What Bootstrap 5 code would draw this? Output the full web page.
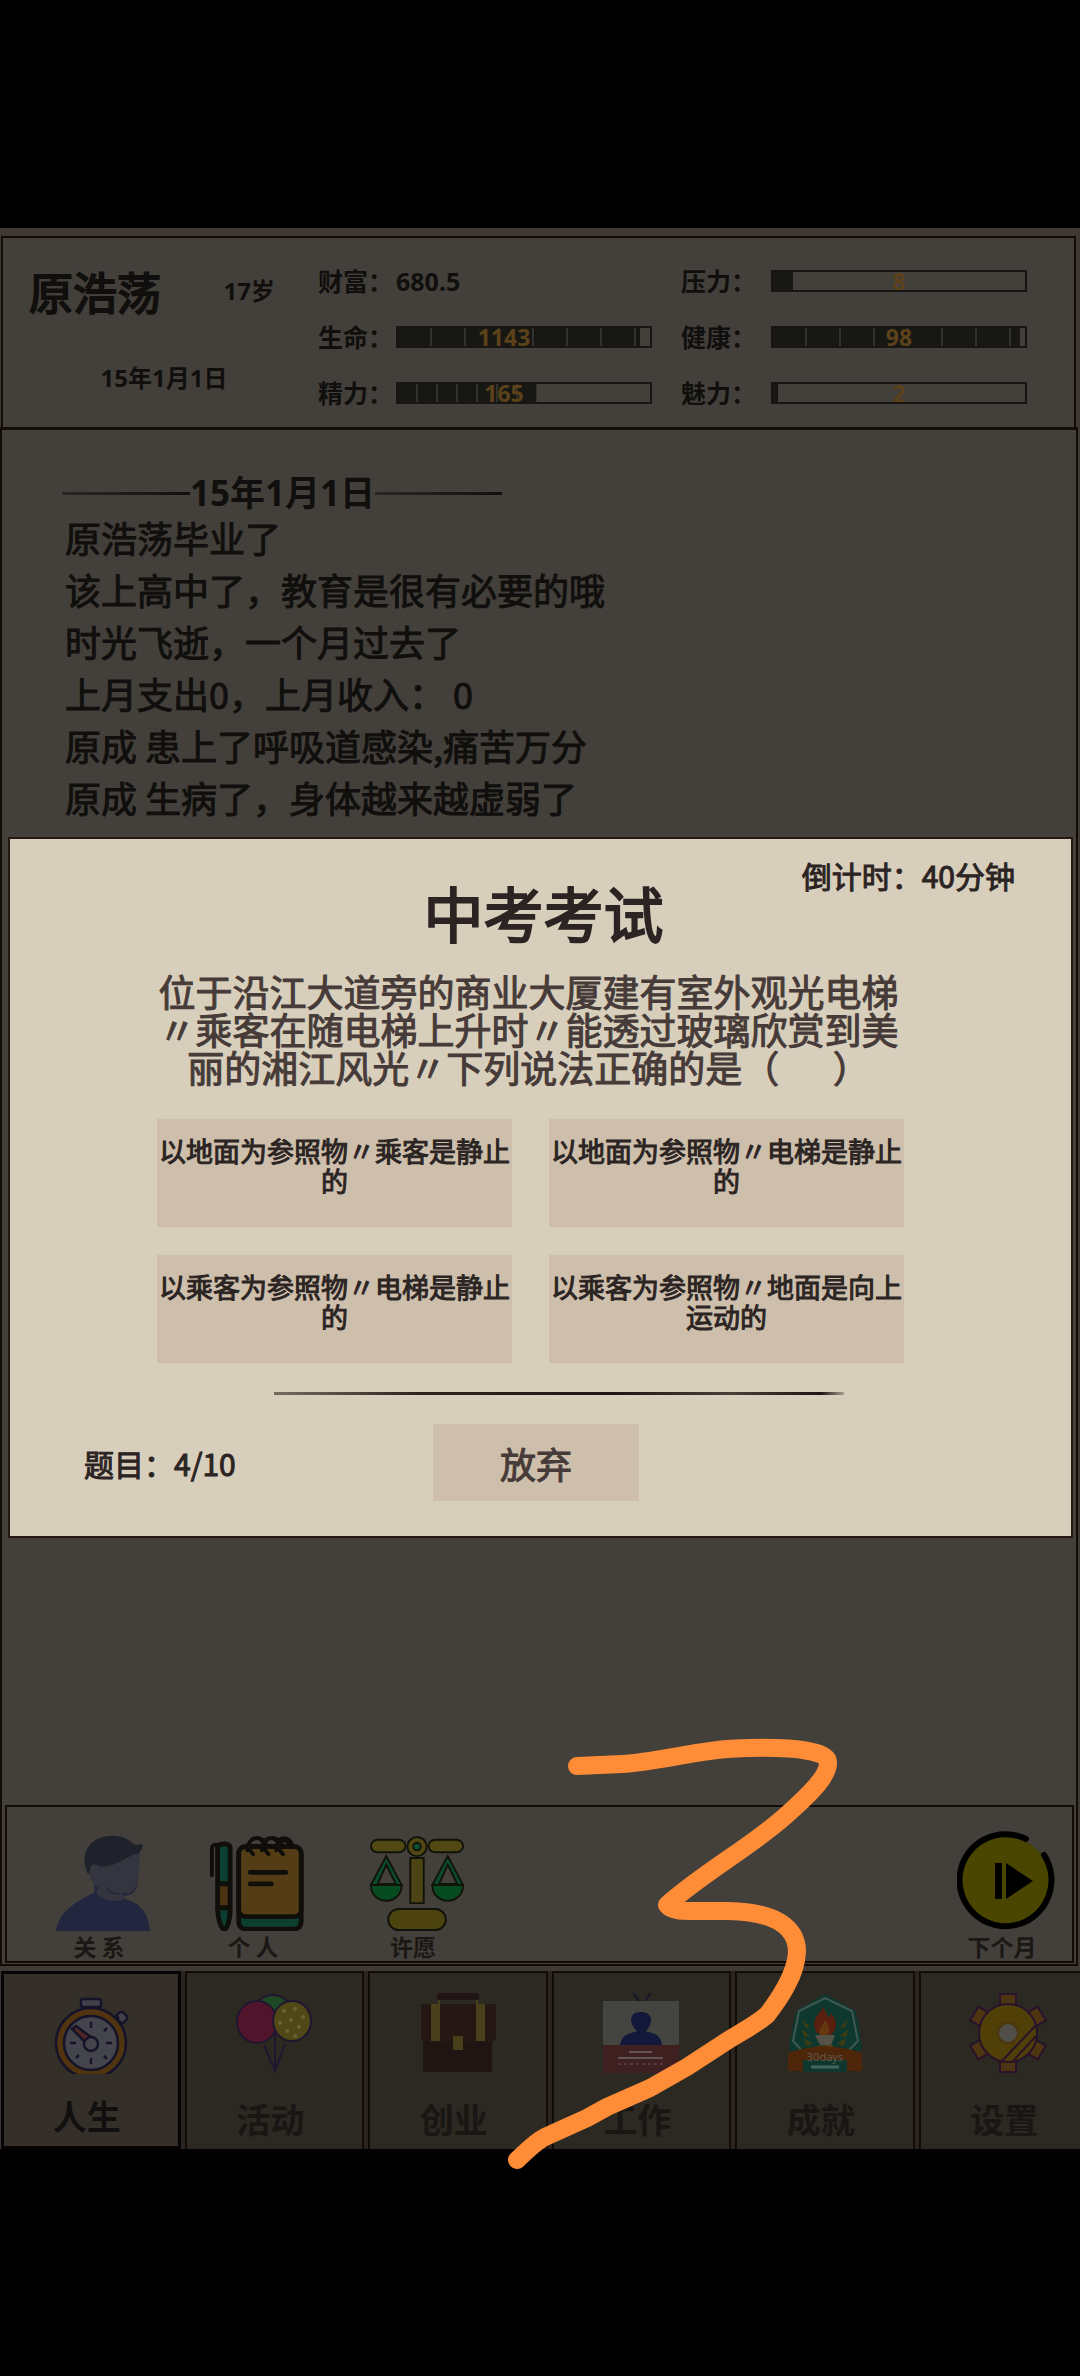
<!DOCTYPE html>
<html lang="zh-CN">
<head>
<meta charset="utf-8">
<meta name="viewport" content="width=device-width, initial-scale=1">
<title>中考考试</title>
<link href="https://cdn.jsdelivr.net/npm/bootstrap@5.3.0/dist/css/bootstrap.min.css" rel="stylesheet">
<style>
  :root { --ink:#100f0d; --panel:#433f3a; --edge:#120b08; --paper:#d8cebc; --tile:#cdbfab; }
  body { background:#000; color:var(--ink); font-family:"Noto Sans CJK SC",sans-serif; font-weight:400; min-height:100vh; }
  .game { margin-top:228px; background:#3f3933; padding-top:8px; overflow:hidden; }
  .game button, .exam button { color:inherit; border:0; border-radius:0; background:none; padding:0; font-weight:inherit; }

  .profile { display:grid; grid-template-columns:315fr 363fr 393fr; height:191px; margin:0 4px 0 1px;
    border:2px solid var(--edge); border-bottom:0; background:var(--panel); font-family:"Noto Sans","Noto Sans CJK SC",sans-serif; font-weight:700; font-size:25px; line-height:34px; }
  .player { padding:25px 43px 0 26px; }
  .player-name { font-family:"Noto Sans CJK SC",sans-serif; font-size:44px; line-height:56px; font-weight:400; -webkit-text-stroke:2px var(--ink); }
  .small-fact { font-size:24px; line-height:32px; }
  .birth { margin-top:43px; padding-left:24px; }
  .stats { padding-top:26px; display:grid; grid-auto-rows:34px; row-gap:22px; align-content:start; }
  .stats label { width:78px; white-space:nowrap; }
  .stats.right label { width:90px; }
  .gauge { width:256px; height:22px; border:2px solid #171613; background:transparent; position:relative; }
  .gauge-fill { height:100%; background:#171714 repeating-linear-gradient(90deg,transparent 0 32px,#34312d 32px 34px); }
  .gauge-fill.fine { background-image:repeating-linear-gradient(90deg,transparent 0 18px,#34312d 18px 20px); }
  .gauge-value { position:absolute; inset:0; text-align:center; line-height:18px; font-size:23px; color:#5c421a; }
  .stats:not(.right) .gauge-value { padding-right:40px; }

  .journal { background:var(--panel); border:2px solid var(--edge); border-top-width:3px; min-height:1539px; margin-right:2px; display:flex; flex-direction:column; justify-content:space-between; margin-bottom:5px; }
  .entries { padding:45px 60px 0; font-size:36px; line-height:52px; -webkit-text-stroke:1px var(--ink); }
  .entries p { margin:0 0 0 3px; }
  .day-head { width:440px; font-family:"Noto Sans","Noto Sans CJK SC",sans-serif; font-weight:700; font-size:35px; line-height:36px; -webkit-text-stroke:0; }
  .day-head::before, .day-head::after { content:""; height:3px; background:linear-gradient(90deg,#2a2723,#12100e); }
  .day-head::before { width:128px; }
  .day-head::after { flex:1; }
  .actions { border:2px solid var(--edge); margin:0 2px 1px 3px; height:158px; padding:24px 16px 0 44px; font-weight:700; font-size:23px; line-height:30px; color:#1b1714; }
  .actions button { width:104px; display:flex; flex-direction:column; align-items:center; }
  .actions button + button { margin-left:50px; }
  .actions button + button + button { margin-left:56px; }
  .actions svg { width:98px; height:100px; margin-top:4px; }
  .actions span { padding-right:8px; }
  .game .actions .next { width:100px; margin-top:-4px; margin-left:auto; }

  .tabs { display:grid; grid-template-columns:repeat(6,1fr); column-gap:4px; height:178px; margin:0 -18px 0 1px; font-weight:700; font-size:34px; line-height:44px; background:#2a2420; }
  .tabs a { color:#1a1613; background:#2c2822; border:2px solid var(--edge); border-bottom:0; text-decoration:none; padding-top:20px; text-align:center; }
  .tabs a.active { color:#12100e; background:#342f29; border:3px solid #050303; }
  .tabs svg { width:78px; height:80px; display:block; margin:0 auto 24px; }
  .tabs a.active svg { margin-bottom:20px; }
  .tabs span { padding-right:8px; }

  .exam { position:absolute; top:837px; left:8px; right:7px; background:var(--paper); border:2px solid #281812; color:#2b2423; padding:19px 0 35px; display:flex; flex-direction:column; align-items:center; }
  .exam-note { font-size:30px; line-height:34px; -webkit-text-stroke:1px #2b2423; }
  .exam h1 { font-size:60px; line-height:72px; font-weight:400; -webkit-text-stroke:2px #2b2423; margin:-16px 0 24px 6px; }
  .question { width:764px; font-size:37px; line-height:38px; color:#463b38; -webkit-text-stroke:1px #463b38; text-align:center; margin:0 24px 33px 0; }
  .answers { display:grid; grid-template-columns:355px 355px; gap:28px 37px; margin-right:20px; }
  .exam .answers button { background:var(--tile); height:108px; font-size:27px; line-height:30px; text-align:center; display:flex; flex-direction:column; align-items:center; padding-top:17px; -webkit-text-stroke:1px #2b2423; }
  .ink-rule { width:570px; height:3px; border:0; opacity:1; margin:29px 0 29px 37px; background:linear-gradient(90deg,#776c60,#30231f 25%,#201614 60%,#4a3e37 80%,#201614 96%,#a99e8f); }
  .exam-foot { width:100%; padding-left:74px; }
  .exam-foot .exam-note { width:160px; }
  .exam .give-up { background:var(--tile); width:206px; height:77px; font-size:36px; color:#463b38; -webkit-text-stroke:1px #463b38; margin-left:189px; }
  .scribble { position:absolute; left:0; top:0; width:1080px; height:2376px; pointer-events:none; }
</style>
<script src="https://cdn.jsdelivr.net/npm/bootstrap@5.3.0/dist/js/bootstrap.bundle.min.js"></script>
</head>
<body class="position-relative">
<main class="game">
  <header class="profile">
    <section class="player">
      <div class="d-flex justify-content-between align-items-center">
        <div class="player-name">原浩荡</div><div class="small-fact">17岁</div>
      </div>
      <div class="small-fact birth text-center">15年1月1日</div>
    </section>
    <section class="stats">
      <div class="d-flex align-items-center"><label>财富：</label><span>680.5</span></div>
      <div class="d-flex align-items-center"><label>生命：</label><div class="gauge"><div class="gauge-fill" style="width:96%"></div><span class="gauge-value">1143</span></div></div>
      <div class="d-flex align-items-center"><label>精力：</label><div class="gauge"><div class="gauge-fill fine" style="width:55%"></div><span class="gauge-value">165</span></div></div>
    </section>
    <section class="stats right">
      <div class="d-flex align-items-center"><label>压力：</label><div class="gauge"><div class="gauge-fill" style="width:8%"></div><span class="gauge-value">8</span></div></div>
      <div class="d-flex align-items-center"><label>健康：</label><div class="gauge"><div class="gauge-fill" style="width:98%"></div><span class="gauge-value">98</span></div></div>
      <div class="d-flex align-items-center"><label>魅力：</label><div class="gauge"><div class="gauge-fill" style="width:2%"></div><span class="gauge-value">2</span></div></div>
    </section>
  </header>

  <section class="journal">
    <div class="entries">
      <div class="day-head d-flex align-items-center">15年1月1日</div>
      <p>原浩荡毕业了</p>
      <p>该上高中了，教育是很有必要的哦</p>
      <p>时光飞逝，一个月过去了</p>
      <p>上月支出0，上月收入： 0</p>
      <p>原成 患上了呼吸道感染,痛苦万分</p>
      <p>原成 生病了，身体越来越虚弱了</p>
    </div>
    <div class="actions d-flex">
      <button type="button">
        <svg viewBox="0 0 98 100"><path d="M0 100C3 80 20 70 40 60V36h44c4 16-1 29-15 27l4 4c15 5 23 13 25 33z" fill="#22263e"/><path d="M34 30c-1 15 4 20 10 25l-2 6c8 8 22 10 30 5l-3-5c12 2 19-6 18-44L45 25z" fill="#34353e"/><path d="M50 52c6 8 14 9 20 9-8 2-16 0-20-9z" fill="#22263e"/><path d="M33 40C24 20 34 2 57 1c12-1 19 4 25 9 4 1 6-1 8-1 1 5-2 7-3 10-12 1-21 14-41 14-5-3-11-5-11 7z" fill="#1f222b"/></svg>
        <span>关 系</span>
      </button>
      <button type="button">
        <svg viewBox="0 0 98 100" stroke="#100e0b" stroke-width="5" stroke-linejoin="round" stroke-linecap="round"><rect x="30" y="14" width="65" height="84" rx="7" fill="#0b4030"/><rect x="30" y="12" width="65" height="73" rx="7" fill="#543d15"/><path d="M42 39h37M42 51h22" /><path fill="none" stroke-width="4" d="M39 16c0-16 16-16 18-5M45 20c-14-14 8-25 14-9M54 16c0-16 16-16 18-5M61 20C47 6 69-5 75 11M69 16c0-16 14-16 17-5M76 20c-12-12 4-21 9-7"/><path d="M8 13c0-5 13-5 13 0v38H8z" fill="#0b4030"/><path d="M8 51h13v25H8z" fill="#4b3312"/><path d="M8 76h13c0 13-3 22-6 22s-7-9-7-22z" fill="#0b4030"/><path fill="none" stroke-width="4" d="M2 42V14c0-3 1-4 8-4"/></svg>
        <span>个 人</span>
      </button>
      <button type="button">
        <svg viewBox="0 0 98 100" stroke="#11130a" stroke-width="2"><rect x="1" y="5" width="36" height="13" rx="7" fill="#514812"/><rect x="61" y="5" width="36" height="13" rx="7" fill="#514812"/><path d="M42 24h14v47H42z" fill="#4c4414"/><circle cx="49" cy="12" r="10" fill="#514812"/><circle cx="49" cy="12" r="4" fill="#0b5130"/><rect x="19" y="77" width="60" height="22" rx="11" fill="#4c430e"/><g id="pan"><path d="M1 52 17 22 33 52z" fill="#0b4a2b"/><path d="M8 51 17 31l10 20z" fill="#433f3a"/><path d="M1 52h32c0 22-32 22-32 0z" fill="#074b20"/></g><use href="#pan" x="64"/></svg>
        <span>许愿</span>
      </button>
      <button type="button" class="next">
        <svg viewBox="0 0 98 100"><circle cx="49" cy="50" r="44" fill="#4a4600"/><path d="M69 8A46 46 0 1 0 87 24" fill="none" stroke="#000" stroke-width="6" stroke-linecap="round"/><path d="M38 32h7v36h-7zM49 32l27 18-27 18z"/></svg>
        <span>下个月</span>
      </button>
    </div>
  </section>

  <nav class="tabs">
    <a href="#life" class="active"><svg viewBox="0 0 78 80" stroke="#151329" stroke-width="2.5"><path d="M34 12h10v9H34z" fill="#41404a"/><rect x="29" y="5" width="20" height="8" rx="2" fill="#41404a"/><rect x="65" y="19" width="10" height="9" rx="3" fill="#41404a" transform="rotate(42 70 23)"/><path d="m62 28 5-5"/><circle cx="39" cy="49" r="35" fill="#50330f"/><circle cx="39" cy="49" r="27" fill="#44454c"/><path d="M39 28v6M39 64v6M18 49h6M54 49h6M24 34l3 3M52 62l3 3M24 64l3-3M52 37l3-3"/><path d="M33 48 20 35l4-3 19 14z" fill="#512725"/><circle cx="39" cy="50" r="7" fill="#44454c"/></svg><span>人生</span></a>
    <a href="#activity"><svg viewBox="0 0 78 80" stroke="#211630" stroke-width="2"><path fill="none" d="m29 52 11 26 10-27M40 40v38"/><ellipse cx="38" cy="20" rx="19" ry="18" fill="#1e4824"/><ellipse cx="22" cy="29" rx="20" ry="21" fill="#50152a"/><ellipse cx="57" cy="28" rx="19" ry="20" fill="#504816"/><g fill="#6b6334" stroke="none"><circle cx="49" cy="18" r="2"/><circle cx="60" cy="16" r="2"/><circle cx="68" cy="24" r="2"/><circle cx="56" cy="27" r="2"/><circle cx="45" cy="30" r="2"/><circle cx="64" cy="34" r="2"/><circle cx="52" cy="38" r="2"/><circle cx="60" cy="43" r="2"/></g></svg><span>活动</span></a>
    <a href="#business"><svg viewBox="0 0 78 80"><path d="M4 48h69v31H4z" fill="#211513"/><path d="M2 11h75v32q0 6-6 6H7q-5 0-5-6z" fill="#251714"/><rect x="18" width="42" height="7" rx="3" fill="#211615"/><path d="M12 11h9v37h-9zM57 11h9v37h-9zM34 43h10v14H34zM19 7h2v6h-2zM57 7h2v6h-2z" fill="#49401b"/></svg><span>创业</span></a>
    <a href="#work"><svg viewBox="0 0 78 80"><path d="m31 0 9 12M49 0l-7 9" stroke="#14182c" stroke-width="2"/><path fill="#444441" d="M1 8h76v44H1z"/><path fill="#3e2021" d="M1 52h76v28H1z"/><path fill="#11183a" d="M18 52c2-12 11-11 17-14-8-7-9-19 4-19s12 12 5 19c6 3 14 1 16 14z"/><path d="M27 59h23M16 65h45" stroke="#625455" stroke-width="2"/><path d="M16 71h46" stroke="#625455" stroke-width="1" stroke-dasharray="3 3"/></svg><span>工作</span></a>
    <a href="#awards"><svg viewBox="0 0 78 80"><path d="m39 1 31 17 6 36-16 25H18L3 54l7-36z" fill="#0e382e"/><path d="M20 62 7 48l6-30 26-13 27 13 6 30-14 14" fill="none" stroke="#3f5854" stroke-width="2"/><g fill="#3c3b12"><path d="m17 27 7 7-5 1zM16 36l8 7-6 1zM18 45l9 6-7 2zM61 27l-7 7 5 1zM62 36l-8 7 6 1zM60 45l-9 6 7 2z"/></g><path d="M31 40c-8-12 2-18 6-26l6 11 2-5c8 10 5 17 0 22z" fill="#592010"/><path d="M34 42c-3-7 3-9 5-15 6 8 5 11 2 16z" fill="#65370f"/><path d="M29 42h20l-4 10H34z" fill="#555248"/><path d="m31 53 16-1-4 8h-8z" fill="#66420d"/><path d="M2 60c25-9 49-9 74 0v18H61V67H17v11H2z" fill="#4e260a"/><text x="39" y="68" font-family="Noto Sans" font-size="11" font-weight="400" text-anchor="middle" fill="#5f5a4e">30days</text><path d="M25 74h28" stroke="#45655e" stroke-width="3"/></svg><span>成就</span></a>
    <a href="#settings"><svg viewBox="0 0 78 80" stroke="#29132b" stroke-width="2"><g fill="#4c3510"><path id="cog" d="M31 1h16v13H31z"/><use href="#cog" transform="rotate(60 39 40)"/><use href="#cog" transform="rotate(120 39 40)"/><use href="#cog" transform="rotate(180 39 40)"/><use href="#cog" transform="rotate(240 39 40)"/><use href="#cog" transform="rotate(300 39 40)"/></g><circle cx="39" cy="40" r="29" fill="#504008"/><path d="M33 68 67 32M44 68l23-25" /><circle cx="39" cy="40" r="10" fill="#504f49" stroke="#4c3510"/></svg><span>设置</span></a>
  </nav>
</main>

<section class="exam" role="dialog" aria-labelledby="exam-title">
  <div class="exam-note align-self-end pe-5 me-2">倒计时：40分钟</div>
  <h1 id="exam-title">中考考试</h1>
  <p class="question">位于沿江大道旁的商业大厦建有室外观光电梯<br>〃乘客在随电梯上升时〃能透过玻璃欣赏到美<br>丽的湘江风光〃下列说法正确的是（　&nbsp;&nbsp;）</p>
  <div class="answers">
    <button type="button">以地面为参照物〃乘客是静止<br>的</button>
    <button type="button">以地面为参照物〃电梯是静止<br>的</button>
    <button type="button">以乘客为参照物〃电梯是静止<br>的</button>
    <button type="button">以乘客为参照物〃地面是向上<br>运动的</button>
  </div>
  <hr class="ink-rule">
  <div class="exam-foot d-flex align-items-center">
    <div class="exam-note">题目：4/10</div>
    <button type="button" class="btn give-up">放弃</button>
  </div>
</section>

<svg class="scribble" viewBox="0 0 1080 2376" fill="none" stroke="#ff8d38" stroke-width="18" stroke-linecap="round" stroke-linejoin="round" aria-hidden="true"><path d="M577 1766L622 1764C660 1762 703 1748 750 1748C800 1747 828 1752 828 1762C829 1774 815 1790 783 1818C750 1847 700 1875 667 1905C672 1911 682 1911 690 1911H728C775 1912 797 1927 797 1952C796 1975 780 1998 767 2015C755 2025 740 2033 730 2039L687 2067L650 2088L607 2107L587 2118L545 2137C535 2142 528 2150 517 2160"/></svg>
</body>
</html>
